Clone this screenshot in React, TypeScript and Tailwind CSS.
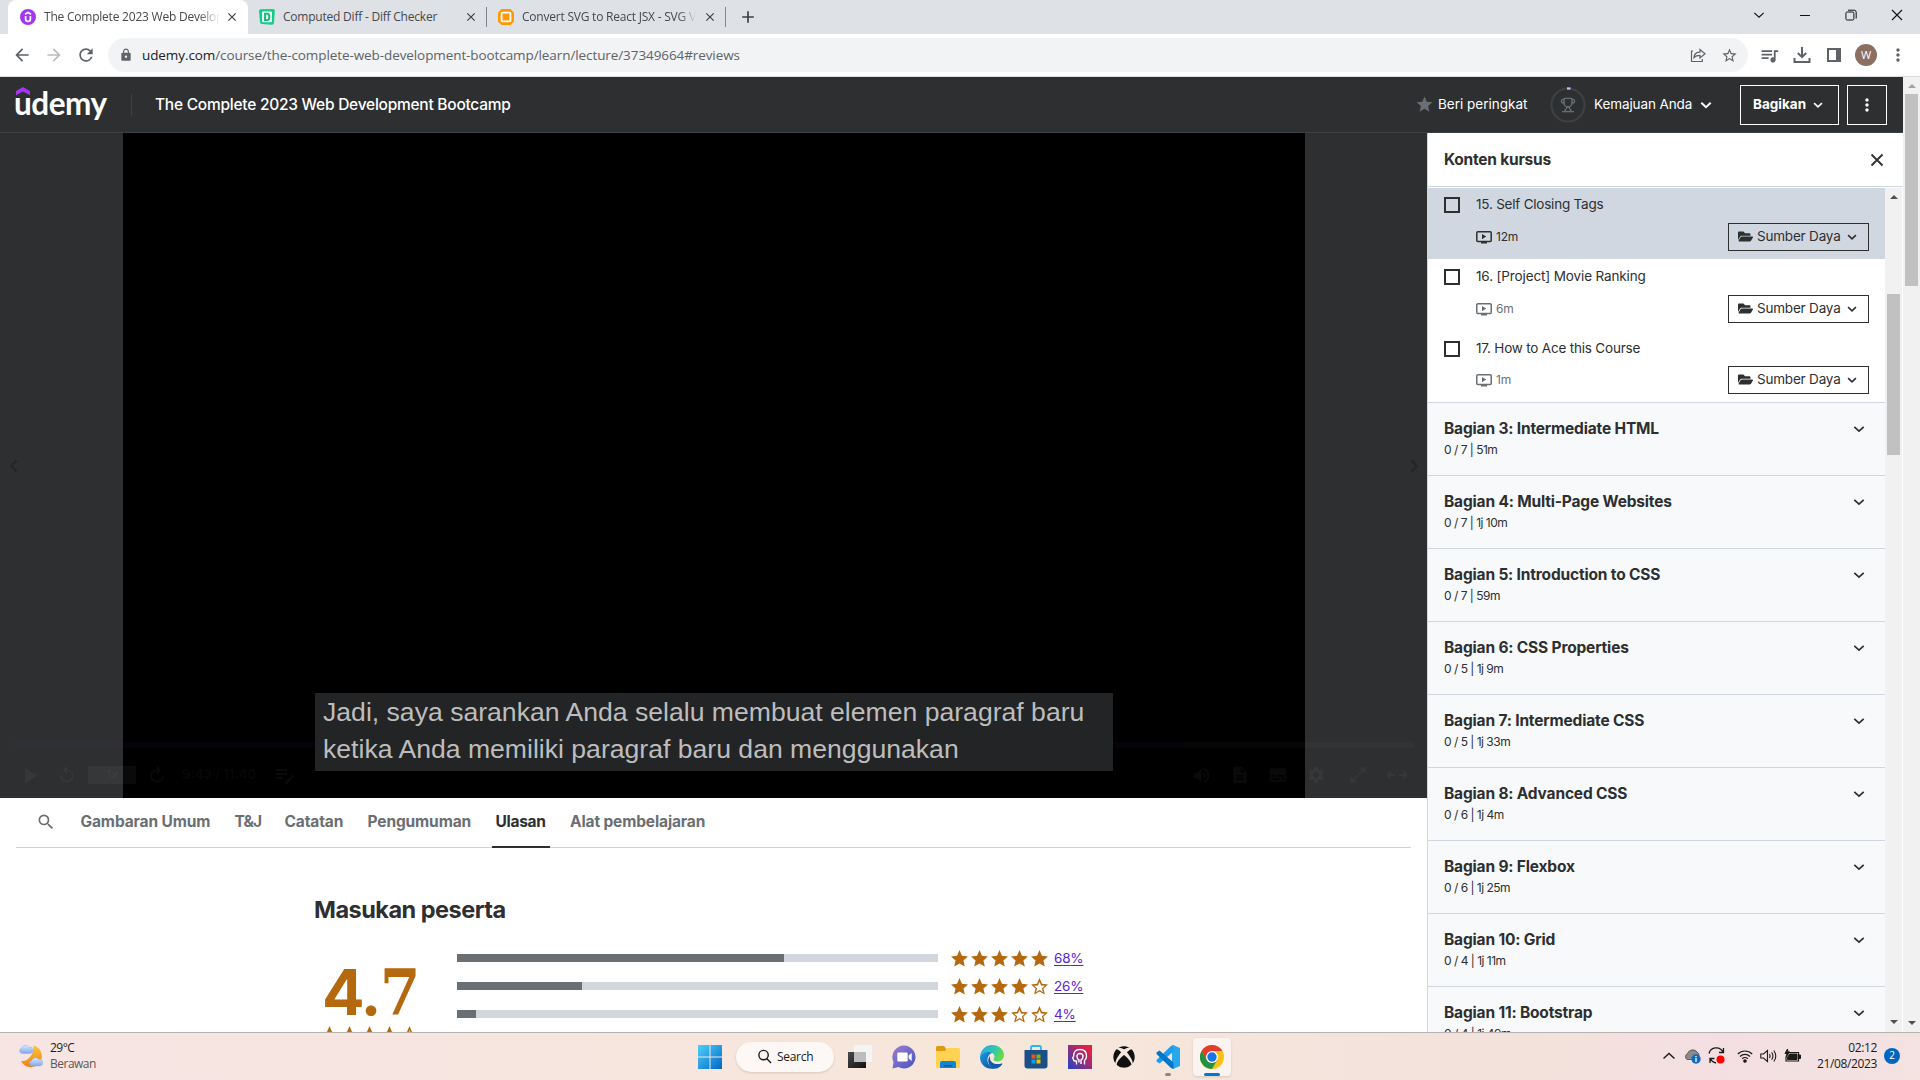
import type { ReactNode } from "react";
import {
  MdArrowBack, MdArrowForward, MdRefresh, MdLock, MdStarBorder, MdStar, MdClose, MdAdd, MdSearch,
  MdPlayArrow, MdReplay, MdEditNote, MdVolumeUp, MdDescription, MdSubtitles, MdSettings, MdOpenInFull, MdMoreVert, MdQueueMusic,
} from "react-icons/md";
import { FaFolderOpen, FaXbox } from "react-icons/fa";
import { Trophy } from "lucide-react";

const ui = "font-['Open_Sans','Noto_Sans',sans-serif]";
const body = "font-['Inter',sans-serif]";

function Chevron({ className = "w-3 h-3", stroke = 1.7 }: { className?: string; stroke?: number }) {
  return (
    <svg viewBox="0 0 12 12" className={`shrink-0 ${className}`} fill="none" stroke="currentColor" strokeWidth={stroke}>
      <path d="M1.3 3.800 6 8.200l4.700-4.400" />
    </svg>
  );
}

function UdemyFavicon() {
  return (
    <svg viewBox="0 0 16 16" className="w-4 h-4 shrink-0">
      <circle cx="8" cy="8" r="8" fill="#a435f0" />
      <path d="M5 5.300 8 3.600l3 1.700M5.600 7v3a2.400 2.400 0 0 0 4.800 0V7" fill="none" stroke="#fff" strokeWidth="1.700" />
    </svg>
  );
}

function DiffFavicon() {
  return (
    <svg viewBox="0 0 16 16" className="w-4 h-4 shrink-0">
      <path d="M0 2Q0 0 2 .2L14 0q2 0 1.800 2L15 14q-.2 1.800-2 1.800L3 15q-2 0-2-2z" fill="#14cc8a" />
      <rect x="3" y="2.500" width="10" height="10.800" rx="1" fill="#e8fff6" />
      <path d="M6 4.700h1.800a2.600 3.200 0 0 1 0 6.400H6z" fill="none" stroke="#0eb476" strokeWidth="1.800" />
    </svg>
  );
}

function SvgFavicon() {
  return (
    <svg viewBox="0 0 16 16" className="w-4 h-4 shrink-0">
      <path d="M3.500 0h9L16 3.500v9L12.500 16h-9L0 12.500v-9z" fill="#ff9800" />
      <rect x="3.600" y="3.600" width="8.800" height="8.800" rx="1" fill="none" stroke="#fff" strokeWidth="1.900" />
    </svg>
  );
}

function TabStrip() {
  return (
    <div className={`flex h-[34px] shrink-0 items-center bg-[#dee1e6] pl-2 text-[12px] tracking-[-0.22px] text-[#45494d] ${ui}`}>
      <div className="flex h-full w-[240px] items-center rounded-t-[8px] bg-white pl-3">
        <UdemyFavicon />
        <span className="ml-2 w-[176px] overflow-hidden whitespace-nowrap [mask-image:linear-gradient(to_right,black_88%,transparent)]">The Complete 2023 Web Develop</span>
        <MdClose className="ml-[5px] h-[14px] w-[14px] text-[#3c4043]" />
      </div>
      <div className="flex w-[238px] items-center pl-[11px]">
        <DiffFavicon />
        <span className="ml-2 w-[181px] whitespace-nowrap">Computed Diff - Diff Checker</span>
        <MdClose className="h-[14px] w-[14px] text-[#3c4043]" />
      </div>
      <div className="flex h-5 w-[240px] items-center border-x border-[#80868b] pl-[11px]">
        <SvgFavicon />
        <span className="ml-2 w-[174px] overflow-hidden whitespace-nowrap [mask-image:linear-gradient(to_right,black_90%,transparent)]">Convert SVG to React JSX - SVG V</span>
        <MdClose className="ml-[7px] h-[14px] w-[14px] shrink-0 text-[#3c4043]" />
      </div>
      <MdAdd className="ml-3 h-5 w-5 text-[#3c4043]" />
      <div className="mb-1 ml-auto mr-[17px] flex items-center gap-[34px] text-[#111]">
        <Chevron className="h-3 w-3" stroke={1.1} />
        <svg viewBox="0 0 12 12" className="h-3 w-3" stroke="currentColor"><path d="M1 6.500h10" /></svg>
        <svg viewBox="0 0 12 12" className="h-3 w-3" stroke="currentColor" fill="none"><rect x=".9" y="3" width="8" height="8" rx="1.300" /><path d="M3 1.200h6.200a2 2 0 0 1 2 2V9.500" /></svg>
        <svg viewBox="0 0 12 12" className="h-3 w-3" stroke="currentColor" strokeWidth="1.100"><path d="m1 1 10 10M11 1 1 11" /></svg>
      </div>
    </div>
  );
}

function Toolbar() {
  return (
    <div className={`flex h-[43px] shrink-0 items-center border-b border-[#dadce0] bg-white text-[#5f6368] ${ui}`}>
      <div className="flex w-[108px] items-center gap-3 pl-3">
        <MdArrowBack className="h-5 w-5" />
        <MdArrowForward className="h-5 w-5 text-[#babcbe]" />
        <MdRefresh className="h-5 w-5" />
      </div>
      <div className="flex h-[34px] w-[1640px] items-center rounded-full bg-[#f1f3f4] pl-[11px] pr-[10px]">
        <MdLock className="h-[14px] w-[14px]" />
        <span className="ml-[9px] text-[13.5px] tracking-[-0.09px] whitespace-nowrap"><span className="text-[#202124]">udemy.com</span>/course/the-complete-web-development-bootcamp/learn/lecture/37349664#reviews</span>
        <svg viewBox="0 0 16 16" className="ml-auto h-4 w-4" fill="none" stroke="currentColor" strokeWidth="1.200">
          <path d="M3 4H1.500v10.500h10.800V12M4 10.500c.3-3.500 2.500-5.300 6-5.300V2.500L15 6.800l-5 4.100V8.300c-2.600 0-4.500.4-6 2.200z" />
        </svg>
        <MdStarBorder className="ml-[15px] h-[17px] w-[17px]" />
      </div>
      <MdQueueMusic className="ml-[11px] h-[21px] w-[21px]" />
      <svg viewBox="0 0 18 18" className="ml-[13px] h-[18px] w-[18px]" fill="none" stroke="currentColor" strokeWidth="2"><path d="M9 1v10M4.800 7 9 11.200 13.200 7M1.500 12v4h15v-4" /></svg>
      <svg viewBox="0 0 16 16" className="ml-[15px] h-4 w-4" fill="none" stroke="currentColor" strokeWidth="2"><rect x="2" y="2" width="12" height="12" /><path d="M12 2v12" strokeWidth="4" /></svg>
      <span className="ml-[13px] flex h-[22px] w-[22px] items-center justify-center rounded-full bg-[#8d6e63] text-[11px] text-white">W</span>
      <MdMoreVert className="ml-[11px] h-5 w-5" />
    </div>
  );
}

function CourseHeader() {
  return (
    <header className={`flex h-14 shrink-0 items-center border-b border-[#3e4143] bg-[#2d2f31] pl-4 pr-4 text-white ${body}`}>
      <div className="relative h-14 w-[115px] shrink-0">
        <span className="absolute left-[-2px] top-[6px] font-['Lato',sans-serif] text-[31.5px] leading-[40px] font-bold tracking-[-0.5px]">udemy</span>
        <svg viewBox="0 0 14 9" className="absolute left-0 top-[10px] h-[9px] w-[14px]"><path d="M7 0 0 4v4.300L7 4.500l7 3.800V4z" fill="#a435f0" /></svg>
      </div>
      <div className="h-[22px] w-px bg-[#3e4143]" />
      <span className="ml-[23px] text-[15.5px] font-medium tracking-[-0.25px] whitespace-nowrap">The Complete 2023 Web Development Bootcamp</span>
      <MdStar className="ml-auto h-[19px] w-[19px] text-[#6a6f73]" />
      <span className="ml-1 w-[90px] text-[13.5px] whitespace-nowrap">Beri peringkat</span>
      <svg viewBox="0 0 36 36" className="ml-[22px] h-9 w-9">
        <circle cx="18" cy="18" r="16.500" fill="none" stroke="#3e4143" strokeWidth="2.200" />
        <path d="M17 1.500h3.500" stroke="#c0c4fc" strokeWidth="2.200" />
        <foreignObject x="10" y="10" width="16" height="16"><Trophy size={16} color="#6a6f73" /></foreignObject>
      </svg>
      <span className="ml-2 w-[98px] text-[13.5px] tracking-[-0.1px] whitespace-nowrap">Kemajuan Anda</span>
      <Chevron className="ml-2 h-3 w-3" stroke={2} />
      <div className="ml-[28px] flex h-10 w-[99px] items-center border border-white pl-3 text-[13.5px] font-bold">
        Bagikan<Chevron className="ml-[7px] h-[10px] w-[10px]" stroke={2} />
      </div>
      <div className="ml-2 flex h-10 w-10 items-center justify-center border border-white"><MdMoreVert className="h-5 w-5" /></div>
    </header>
  );
}

function Video() {
  return (
    <div className="relative flex h-[665px] shrink-0 flex-col justify-end bg-[#2d2f31]">
      <div className="absolute inset-y-0 left-[123px] w-[1182px] bg-black" />
      <span className="absolute top-[326px] left-[7px] text-[#242628]"><Chevron className="h-[14px] w-[14px] rotate-90" stroke={2} /></span>
      <span className="absolute top-[326px] right-[6px] text-[#242628]"><Chevron className="h-[14px] w-[14px] -rotate-90" stroke={2} /></span>
      <div className="relative mx-[13px] mb-[17px] flex h-[6px]">
        <div className="w-[1167px] bg-[#5022c3]/6" />
        <div className="flex-1 bg-white/2" />
      </div>
      <div className={`relative mb-[13px] flex h-5 items-center pl-[16px] pr-[19px] text-white/4 ${body}`}>
        <MdPlayArrow className="h-[27px] w-[27px]" />
        <MdReplay className="ml-[14px] h-5 w-5" />
        <span className="ml-[11px] flex h-[18px] w-12 items-center justify-center bg-white/4 text-[12px] font-bold">1x</span>
        <MdReplay className="ml-[11px] h-5 w-5 -scale-x-100" />
        <span className="ml-[15px] w-[75px] text-[13px] font-bold whitespace-nowrap">9:43 / 11:40</span>
        <MdEditNote className="ml-[16px] h-6 w-6" />
        <div className="ml-auto flex items-center gap-[18px]">
          <MdVolumeUp className="h-[21px] w-[21px]" />
          <MdDescription className="h-5 w-5" />
          <MdSubtitles className="h-5 w-5" />
          <MdSettings className="h-5 w-5" />
          <MdOpenInFull className="ml-1 h-5 w-5" />
          <svg viewBox="0 0 22 12" className="h-3 w-[22px]" fill="none" stroke="currentColor" strokeWidth="2"><path d="M5 2 1.500 6 5 10M2 6h7M17 2l3.500 4L17 10M20 6h-7" /></svg>
        </div>
      </div>
      <div className="absolute left-[315px] top-[560px] h-[78px] w-[798px] bg-[#232425] pl-2 pt-[1px] font-['Liberation_Sans',Arial,sans-serif] text-[26.600px] leading-[37px] whitespace-nowrap text-[#bdbdbd]">
        <p>Jadi, saya sarankan Anda selalu membuat elemen paragraf baru</p>
        <p>ketika Anda memiliki paragraf baru dan menggunakan</p>
      </div>
    </div>
  );
}

function Tabs() {
  return (
    <nav className={`mx-4 flex h-[50px] w-[1395px] shrink-0 items-center gap-[24.5px] border-b border-[#d1d2d4] pb-[2px] text-[15.5px] font-bold tracking-[-0.13px] whitespace-nowrap text-[#6a6f73] ${body}`}>
      <MdSearch className="ml-5 h-5 w-5" />
      <span className="w-[129.500px]">Gambaran Umum</span>
      <span className="w-[25.500px] tracking-[-0.9px]">T&amp;J</span>
      <span className="w-[58.500px]">Catatan</span>
      <span className="w-[103.500px]">Pengumuman</span>
      <span className="-mx-1 mt-[2px] flex h-[50px] w-[58px] items-center border-b-2 border-[#2d2f31] px-1 tracking-[-0.3px] text-[#2d2f31]">Ulasan</span>
      <span>Alat pembelajaran</span>
    </nav>
  );
}

function StarShape({ fill }: { fill: "full" | "half" | "none" }) {
  return (
    <svg viewBox="0 0 16 16" className="h-[17px] w-[17px]">
      <path d="M8 0 10.300 5.500l5.700.5-4.300 3.800 1.300 5.800L8 12.600l-5 3 1.300-5.800L0 6l5.700-.5z" fill="#b4690e" />
      {fill === "none" && <path d="M8 3.600 9.400 7l3.700.3-2.800 2.400.9 3.600L8 11.400l-3.200 1.900.9-3.600L2.900 7.300 6.600 7z" fill="#fff" />}
      {fill === "half" && <path d="M8 3.600 9.500 7l3.700.3-2.800 2.400.8 3.600L8 11.400z" fill="#fff" />}
    </svg>
  );
}

const ratings = [
  { pct: 68, stars: 5 },
  { pct: 26, stars: 4 },
  { pct: 4, stars: 3 },
];

function Reviews() {
  return (
    <section className={`flex min-h-0 flex-1 flex-col overflow-hidden pl-[314px] pt-[43px] ${body}`}>
      <h2 className="h-[38px] text-[23.500px] leading-[38px] font-bold tracking-[-0.5px] text-[#2d2f31]">Masukan peserta</h2>
      <div className="mt-[15px] flex">
        <div className="w-[143px] shrink-0 pl-[7px]">
          <div className="mt-[16px] h-[64px] pl-[1px] text-[63px] leading-[64px] font-bold tracking-[-2px] whitespace-nowrap text-[#b4690e]">4.<span className="inline-block origin-left scale-x-92 font-['DejaVu_Serif',serif]">7</span></div>
          <div className="mt-[2px] flex gap-[3px]">
            <StarShape fill="full" /><StarShape fill="full" /><StarShape fill="full" /><StarShape fill="full" /><StarShape fill="half" />
          </div>
        </div>
        <div>
          {ratings.map((r) => (
            <div key={r.pct} className="flex h-7 items-center">
              <div className="h-2 w-[481px] bg-[#d1d7dc]"><div className="h-full bg-[#6a6f73]" style={{ width: `${r.pct}%` }} /></div>
              <div className="ml-[13px] flex gap-[3px]">
                {[1, 2, 3, 4, 5].map((n) => <StarShape key={n} fill={n <= r.stars ? "full" : "none"} />)}
              </div>
              <span className="ml-[6px] text-[13.500px] tracking-[-0.2px] text-[#5624d0] underline underline-offset-2">{r.pct}%</span>
            </div>
          ))}
        </div>
      </div>
    </section>
  );
}

function VideoIcon() {
  return (
    <svg viewBox="0 0 16 13" className="h-[13px] w-4 shrink-0">
      <rect x=".8" y=".8" width="14.400" height="9.700" rx="1" fill="none" stroke="currentColor" strokeWidth="1.500" />
      <path d="M6 3v5.200l4.200-2.600zM5 11h6v1.500H5z" fill="currentColor" />
    </svg>
  );
}

const lectures = [
  { title: "15. Self Closing Tags", time: "12m", row: "bg-[#d1d7e0] h-[71px] pt-[9px]", gap: "mt-[11px]", meta: "text-[#2d2f31]", track: "tracking-[-0.22px]" },
  { title: "16. [Project] Movie Ranking", time: "6m", row: "h-[72px] pt-[10px]", gap: "mt-[11px]", meta: "text-[#6a6f73]", track: "tracking-[-0.13px]" },
  { title: "17. How to Ace this Course", time: "1m", row: "h-[71px] pt-[10px]", gap: "mt-[10px]", meta: "text-[#6a6f73]", track: "tracking-[-0.2px]" },
];

const sections = [
  ["Bagian 3: Intermediate HTML", "0 / 7 | 51m"],
  ["Bagian 4: Multi-Page Websites", "0 / 7 | 1j 10m"],
  ["Bagian 5: Introduction to CSS", "0 / 7 | 59m"],
  ["Bagian 6: CSS Properties", "0 / 5 | 1j 9m"],
  ["Bagian 7: Intermediate CSS", "0 / 5 | 1j 33m"],
  ["Bagian 8: Advanced CSS", "0 / 6 | 1j 4m"],
  ["Bagian 9: Flexbox", "0 / 6 | 1j 25m"],
  ["Bagian 10: Grid", "0 / 4 | 1j 11m"],
  ["Bagian 11: Bootstrap", "0 / 4 | 1j 49m"],
];

function Arrow({ up, className }: { up?: boolean; className: string }) {
  return (
    <svg viewBox="0 0 8 4" className={`h-1 w-2 shrink-0 ${className}`}><path d={up ? "M0 4h8L4 0z" : "M0 0h8L4 4z"} fill="currentColor" /></svg>
  );
}

function Sidebar() {
  return (
    <aside className={`flex min-h-0 w-[476px] shrink-0 flex-col border-l border-[#d1d7dc] bg-white text-[#2d2f31] ${body}`}>
      <div className="flex h-[54px] shrink-0 items-center justify-between border-b border-[#d1d7e0] pl-[16px] pr-[16px]">
        <span className="text-[15.5px] font-bold tracking-[-0.22px]">Konten kursus</span>
        <svg viewBox="0 0 20 20" className="h-5 w-5" stroke="currentColor" strokeWidth="1.800"><path d="m4.500 4.500 11 11M15.500 4.500l-11 11" /></svg>
      </div>
      <div className="mt-px flex min-h-0 flex-1">
        <div className="w-[457px] overflow-hidden">
          {lectures.map((l) => (
            <div key={l.title} className={`flex pl-4 ${l.row}`}>
              <span className="h-4 w-4 shrink-0 border-2 border-[#2d2f31]" />
              <div className="ml-4 flex-1">
                <p className={`-mt-px text-[13.500px] leading-[16px] ${l.track}`}>{l.title}</p>
                <div className={`flex h-7 items-center pr-4 ${l.gap}`}>
                  <span className={`flex items-center gap-1 text-[12px] tracking-[-0.2px] ${l.meta}`}><VideoIcon />{l.time}</span>
                  <span className="ml-auto flex h-7 w-[141px] items-center border border-[#2d2f31] pb-px pl-[9px] text-[13.5px] tracking-[-0.2px] whitespace-nowrap">
                    <FaFolderOpen className="mr-[4px] h-[15px] w-[15px]" />
                    <span className="w-[82px]">Sumber Daya</span>
                    <Chevron className="ml-2 h-[10px] w-[10px]" stroke={1.9} />
                  </span>
                </div>
              </div>
            </div>
          ))}
          {sections.map(([title, sub]) => (
            <div key={title} className="h-[73px] border-t border-[#d1d7e0] bg-[#f7f9fa] pl-[16px] pr-[20px] pt-[15px]">
              <div className="flex h-[22px] items-center justify-between">
                <span className="text-[15.5px] font-bold tracking-[-0.17px]">{title}</span>
                <Chevron className="h-3 w-3" />
              </div>
              <p className="mt-px text-[12px] leading-[18px] tracking-[-0.5px]">{sub}</p>
            </div>
          ))}
        </div>
        <div className="flex w-[17px] flex-col items-center bg-[#f1f1f1] text-[#505050]">
          <Arrow up className="mt-[7px]" />
          <div className="mt-[95px] h-[161px] w-[13px] bg-[#c1c1c1]" />
          <Arrow className="mb-[8px] mt-auto" />
        </div>
        <div className="w-px bg-white" />
      </div>
    </aside>
  );
}

function AppIcon({ children, className = "" }: { children: ReactNode; className?: string }) {
  return <svg viewBox="0 0 24 24" className={`h-6 w-6 shrink-0 ${className}`}>{children}</svg>;
}

function Taskbar() {
  return (
    <footer className={`flex h-12 shrink-0 items-center border-t border-[#b9b1b1] bg-[linear-gradient(90deg,#f6e5e3_0%,#f6e6df_30%,#f6e7da_50%,#f5e4dc_68%,#f3e2dc_80%,#f3dfe2_90%,#f4e3e1_100%)] text-[#1b1b1b] ${ui}`}>
      <div className="flex w-[698px] items-center pb-[2px] pl-[19px] text-[12px] leading-4 tracking-[-0.5px]">
        <svg viewBox="0 0 24 24" className="h-6 w-6">
          <defs>
            <linearGradient id="moon" x1="0" y1="0" x2="0" y2="1"><stop stopColor="#fcc53b" /><stop offset="1" stopColor="#ee7f1d" /></linearGradient>
            <linearGradient id="cloud" x1="0" y1="0" x2="0" y2="1"><stop stopColor="#dce9fb" /><stop offset="1" stopColor="#7fa6ea" /></linearGradient>
          </defs>
          <path d="M14.500 1.500A11 11 0 1 1 2 17C9 18 15 11 14.500 1.500z" fill="url(#moon)" />
          <path d="M3 9.500a3 3 0 0 1-.3-5.800A4.200 4.200 0 0 1 10 3a3.300 3.300 0 0 1 1.500 6.500z" fill="url(#cloud)" stroke="#8fb0e8" strokeWidth=".5" />
          <path d="M13 22a2.800 2.800 0 0 1-.3-5.500 4 4 0 0 1 7-1.200A3.400 3.400 0 0 1 21 22z" fill="url(#cloud)" stroke="#8fb0e8" strokeWidth=".5" />
        </svg>
        <div className="ml-[7px]"><p>29°C</p><p className="text-[#5c5655]">Berawan</p></div>
      </div>
      <AppIcon>
        <defs><linearGradient id="win" x1="0" y1="0" x2="1" y2="1"><stop stopColor="#4fd0fb" /><stop offset="1" stopColor="#0067c6" /></linearGradient></defs>
        <path d="M0 0h11.500v11.500H0zM12.500 0H24v11.500H12.500zM0 12.500h11.500V24H0zM12.500 12.500H24V24H12.500z" fill="url(#win)" />
      </AppIcon>
      <div className="ml-[14px] flex h-[30px] w-[98px] items-center rounded-full bg-[#fdf8f5] pl-[21px] text-[12px] tracking-[-0.3px] shadow-sm">
        <svg viewBox="0 0 16 16" className="mr-[5px] h-[15px] w-[15px]" fill="none" stroke="currentColor" strokeWidth="1.500"><circle cx="7" cy="6.500" r="5" /><path d="m10.500 10.500 4.500 4.500" /></svg>
        Search
      </div>
      <div className="ml-[14px] flex items-center gap-5">
        <AppIcon>
          <defs><linearGradient id="tv" x1="0" y1="0" x2="1" y2="1"><stop stopColor="#4a4a4a" /><stop offset="1" stopColor="#111" /></linearGradient></defs>
          <path d="M6 0h18v17H6z" fill="#f4f4f4" /><path d="M0 7h18v16H0z" fill="url(#tv)" /><path d="M6 7h12v10H6z" fill="#bdbdbd" />
        </AppIcon>
        <AppIcon>
          <defs><linearGradient id="chat" x1="0" y1="0" x2="1" y2="1"><stop stopColor="#9a7fd6" /><stop offset="1" stopColor="#4b53bc" /></linearGradient></defs>
          <path d="M12 .5a11.500 11.500 0 1 1-5.500 21.600L.5 23.500 1.500 17A11.500 11.500 0 0 1 12 .5z" fill="url(#chat)" />
          <path d="M6.500 7.500h8a1.200 1.200 0 0 1 1.200 1.200v6.600a1.200 1.200 0 0 1-1.200 1.200h-8a1.200 1.200 0 0 1-1.200-1.200V8.700a1.200 1.200 0 0 1 1.200-1.200zM16.700 10.500l3-2.500v8l-3-2.500z" fill="#fff" />
        </AppIcon>
        <AppIcon>
          <path d="M0 2.500Q0 1 1.500 1H8l2 2.500V7H0z" fill="#dd9a0d" />
          <path d="M0 6h9l2-3h11.500Q24 3 24 4.500V23H1.500Q0 23 0 21.500z" fill="#ffd251" />
          <path d="M4 23v-5q0-2 2-2h12q2 0 2 2v5z" fill="#1683d0" /><path d="M8 20h8v1.500H8z" fill="#0b5ea6" />
        </AppIcon>
        <AppIcon>
          <defs>
            <linearGradient id="edgeA" x1="0" y1="0" x2="1" y2=".4"><stop stopColor="#23a9e8" /><stop offset=".6" stopColor="#2fc6b0" /><stop offset="1" stopColor="#66d94a" /></linearGradient>
            <linearGradient id="edgeB" x1="0" y1="0" x2="1" y2="1"><stop stopColor="#1a9be0" /><stop offset="1" stopColor="#0b4a9b" /></linearGradient>
          </defs>
          <path d="M0 12C.5 4.500 6 0 12 0c7 0 12 4.800 12 10 0 4-3 6.500-6.500 6.500-2.500 0-4-1-4-2 0-.8 1-1.300 1-3 0-2.300-2.300-4.500-5.500-4.500C5 7 1.500 9 0 12z" fill="url(#edgeA)" />
          <path d="M0 12c1-3 4.500-5 8.500-5 1.500 0 3 .4 4 1-3 .6-5 3.500-5 7 0 4.500 3.500 8 8 8.400C7 25.500 0 20 0 12z" fill="url(#edgeB)" />
          <path d="M10 11c-1 6 4 9.500 11.500 7.500.8-.2 1 .3.600.9C20 22.500 17 24 14 23.500 8.500 22 6.500 15 10 11z" fill="#0f5aaf" />
        </AppIcon>
        <AppIcon>
          <path d="M7 6V2.500Q7 1 8.500 1h7Q17 1 17 2.500V6" fill="none" stroke="#28b5f0" strokeWidth="1.800" />
          <path d="M.5 5h23v15.500q0 3-3 3h-17q-3 0-3-3z" fill="#1c4f86" />
          <path d="M7.500 9.500h4v4h-4z" fill="#f25022" /><path d="M12.500 9.500h4v4h-4z" fill="#7fba00" /><path d="M7.500 14.500h4v4h-4z" fill="#00a4ef" /><path d="M12.500 14.500h4v4h-4z" fill="#ffb900" />
        </AppIcon>
        <AppIcon>
          <defs><linearGradient id="pred" x1="1" y1="0" x2="0" y2="1"><stop stopColor="#fb1f2c" /><stop offset=".45" stopColor="#a32a72" /><stop offset="1" stopColor="#1a46c8" /></linearGradient></defs>
          <path d="M0 0h24v24H0z" fill="url(#pred)" />
          <path d="M8.500 19.500V16H7q-1.500 0-1.500-1.500l-.8-1.500 1-2Q5.500 4.500 12 4.500T18.500 11q0 3-2 4.500v4M11 17.500v-2.500q-2-1-2-3.500a3 3 0 0 1 6 0q0 2.500-2 3.500v4" fill="none" stroke="#fff" strokeWidth="1.400" />
        </AppIcon>
        <span className="flex h-6 w-6 items-center justify-center"><FaXbox className="h-[22px] w-[22px] text-[#111]" /></span>
        <div className="relative h-6 w-6">
          <AppIcon>
            <path d="M17 0 24 3v18l-7 3-1-6V6z" fill="#28a8ea" />
            <path d="M17.500 6.500 3.500 18.500.5 16.500v-1.500L15 1q1-1 2.500-.8z" fill="#1f9cf0" />
            <path d="M17.500 17.500 3.500 5.500.5 7.500V9L15 23q1 1 2.500.8z" fill="#0078c9" />
          </AppIcon>
          <span className="absolute bottom-[-7px] left-[9px] h-[3px] w-[6px] rounded-full bg-[#8f8581]" />
        </div>
        <div className="relative -ml-[7px] flex h-[38px] w-[38px] items-center justify-center rounded bg-[#faf3f0] shadow-sm">
          <AppIcon>
            <circle cx="12" cy="12" r="12" fill="#fbc116" />
            <path d="M12 6h10.400A12 12 0 0 0 1.600 6L6.800 15z" fill="#e33b2e" />
            <path d="M1.600 6a12 12 0 0 0 10.400 18l5.200-9-5.200 3-5.200-3z" fill="#229342" />
            <circle cx="12" cy="12" r="6" fill="#fff" /><circle cx="12" cy="12" r="4.700" fill="#1a73e8" />
          </AppIcon>
          <span className="absolute bottom-0 left-[11px] h-[3px] w-4 rounded-full bg-[#0078d4]" />
        </div>
      </div>
      <div className="ml-auto flex items-center pb-[2px] pr-[20px]">
        <Chevron className="h-[14px] w-[14px] rotate-180" stroke={1.2} />
        <svg viewBox="0 0 17 16" className="ml-[8px] h-4 w-[17px]">
          <path d="M3 11.500a3.500 3.500 0 0 1 .5-6A5.500 5.500 0 0 1 13 4a4 4 0 0 1 2 4l-3 3.500z" fill="#8a8a8a" stroke="#444" strokeWidth=".8" />
          <circle cx="12" cy="11" r="4.700" fill="#0f6cbd" /><path d="M12 10v4M12 8v1.300" stroke="#fff" strokeWidth="1.300" />
        </svg>
        <svg viewBox="0 0 17 17" className="ml-[7px] h-[17px] w-[17px]" fill="none" stroke="currentColor" strokeWidth="1.300">
          <path d="M1 6.500A7.500 7.500 0 0 1 15 5M15.500 1v4.500H11M2 16v-4.500h4.500M2.500 12q2 3.500 5.500 4" /><circle cx="12.500" cy="12.500" r="4" fill="#f00" stroke="none" />
        </svg>
        <svg viewBox="0 0 16 14" className="ml-[12px] h-[14px] w-4" fill="none" stroke="currentColor" strokeWidth="1.200">
          <path d="M.8 5a10.200 10.200 0 0 1 14.400 0M3 7.500a7 7 0 0 1 10 0M5.200 9.800a4 4 0 0 1 5.600 0" /><circle cx="8" cy="12" r="1.200" fill="currentColor" />
        </svg>
        <svg viewBox="0 0 17 14" className="ml-[7px] h-[14px] w-[17px]" fill="none" stroke="currentColor" strokeWidth="1.100">
          <path d="M.8 5v4h2.700L7.500 12.500v-11L3.500 5zM9.500 5q1.200 2 0 4M11.700 3.200q2.500 3.800 0 7.600M13.800 1.500q4 5.500 0 11" />
        </svg>
        <svg viewBox="0 0 17 14" className="ml-[7px] h-[14px] w-[17px]" fill="none" stroke="currentColor">
          <path d="M5 3.500h9.500v8.500H2V8" strokeWidth="1.200" /><path d="M6 5h7v5.500H3.500V8zM15 6h1.500v3.500H15z" fill="currentColor" /><path d="M3.500 0 1 4.500h2L2 8l4-5H4z" fill="currentColor" />
        </svg>
        <div className="ml-[14px] w-[62px] text-right text-[12px] leading-4 tracking-[-0.36px]"><p>02:12</p><p>21/08/2023</p></div>
        <span className="ml-[7px] flex h-4 w-4 items-center justify-center rounded-full bg-[#0067c0] text-[10px] text-white">2</span>
      </div>
    </footer>
  );
}

export default function App() {
  return (
    <div className="flex h-[1080px] w-[1920px] flex-col overflow-hidden bg-white">
      <TabStrip />
      <Toolbar />
      <div className="flex min-h-0 flex-1">
        <div className="flex w-[1903px] flex-col">
          <CourseHeader />
          <div className="flex min-h-0 flex-1">
            <main className="flex w-[1427px] flex-col bg-white">
              <Video />
              <Tabs />
              <Reviews />
            </main>
            <Sidebar />
          </div>
        </div>
        <div className="flex w-[17px] flex-col items-center bg-[#f1f1f1] text-[#505050]">
          <Arrow up className="mt-[7px] text-[#a3a3a3]" />
          <div className="mt-[6px] h-[192px] w-[13px] bg-[#c1c1c1]" />
          <Arrow className="mb-[7px] mt-auto" />
        </div>
      </div>
      <Taskbar />
    </div>
  );
}
